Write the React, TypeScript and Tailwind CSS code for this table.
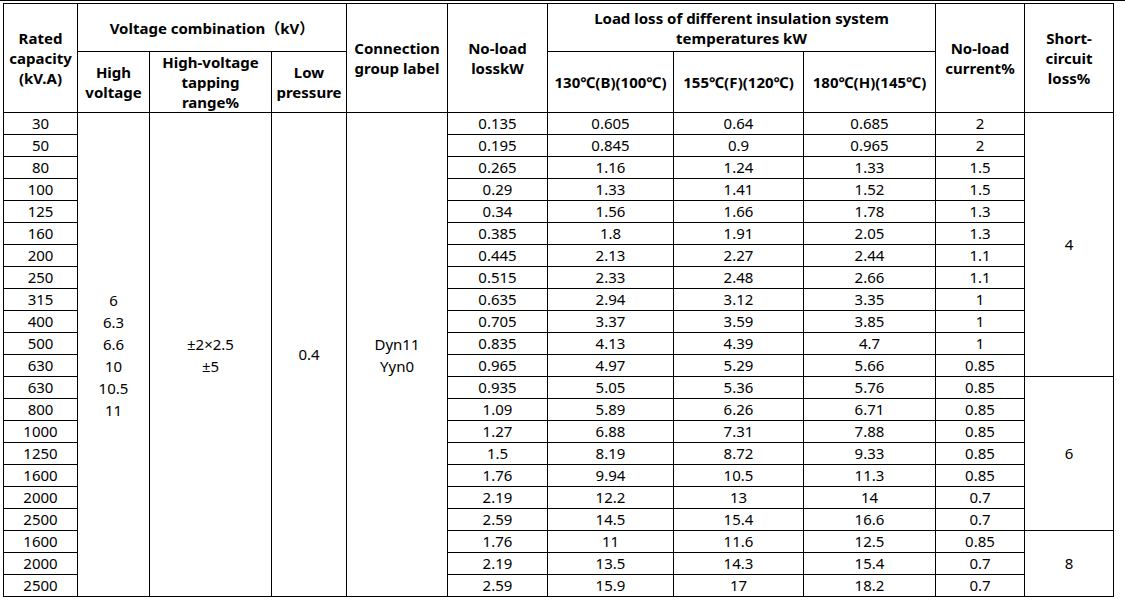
const rows: string[][] = [
  ['30', '0.135', '0.605', '0.64', '0.685', '2'],
  ['50', '0.195', '0.845', '0.9', '0.965', '2'],
  ['80', '0.265', '1.16', '1.24', '1.33', '1.5'],
  ['100', '0.29', '1.33', '1.41', '1.52', '1.5'],
  ['125', '0.34', '1.56', '1.66', '1.78', '1.3'],
  ['160', '0.385', '1.8', '1.91', '2.05', '1.3'],
  ['200', '0.445', '2.13', '2.27', '2.44', '1.1'],
  ['250', '0.515', '2.33', '2.48', '2.66', '1.1'],
  ['315', '0.635', '2.94', '3.12', '3.35', '1'],
  ['400', '0.705', '3.37', '3.59', '3.85', '1'],
  ['500', '0.835', '4.13', '4.39', '4.7', '1'],
  ['630', '0.965', '4.97', '5.29', '5.66', '0.85'],
  ['630', '0.935', '5.05', '5.36', '5.76', '0.85'],
  ['800', '1.09', '5.89', '6.26', '6.71', '0.85'],
  ['1000', '1.27', '6.88', '7.31', '7.88', '0.85'],
  ['1250', '1.5', '8.19', '8.72', '9.33', '0.85'],
  ['1600', '1.76', '9.94', '10.5', '11.3', '0.85'],
  ['2000', '2.19', '12.2', '13', '14', '0.7'],
  ['2500', '2.59', '14.5', '15.4', '16.6', '0.7'],
  ['1600', '1.76', '11', '11.6', '12.5', '0.85'],
  ['2000', '2.19', '13.5', '14.3', '15.4', '0.7'],
  ['2500', '2.59', '15.9', '17', '18.2', '0.7'],
];

// short-circuit loss groups: start row -> [rowSpan, value]
const shortCircuit: Record<number, [number, string]> = {
  0: [12, '4'],
  12: [7, '6'],
  19: [3, '8'],
};

const widths = [74, 72, 122, 75, 101, 100, 126, 130, 132, 89, 89];

const th = 'border border-black p-0 text-center align-middle font-bold leading-[20px]';
const td = 'border border-black p-0 text-center align-middle leading-[21px]';

export default function App() {
  return (
    <div
      className="min-h-[606px] w-[1125px] border-t border-black bg-white text-[15px] text-black"
      style={{ fontFamily: '"Noto Sans", "Noto Sans CJK SC", sans-serif' }}
    >
      <table className="ml-[3px] mt-[2px] table-fixed border-collapse">
        <colgroup>
          {widths.map((w, i) => (
            <col key={i} style={{ width: w }} />
          ))}
        </colgroup>
        <thead>
          <tr className="h-[48px]">
            <th rowSpan={2} className={th}>
              Rated
              <br />
              capacity
              <br />
              (kV.A)
            </th>
            <th colSpan={3} className={th}>
              Voltage combination（kV）
            </th>
            <th rowSpan={2} className={th}>
              Connection
              <br />
              group label
            </th>
            <th rowSpan={2} className={th}>
              No-load
              <br />
              losskW
            </th>
            <th colSpan={3} className={th}>
              Load loss of different insulation system
              <br />
              temperatures kW
            </th>
            <th rowSpan={2} className={th}>
              No-load
              <br />
              current%
            </th>
            <th rowSpan={2} className={th}>
              Short-
              <br />
              circuit
              <br />
              loss%
            </th>
          </tr>
          <tr className="h-[60px]">
            <th className={th}>
              High
              <br />
              voltage
            </th>
            <th className={th}>
              High-voltage
              <br />
              tapping
              <br />
              range%
            </th>
            <th className={th}>
              Low
              <br />
              pressure
            </th>
            <th className={`${th} whitespace-nowrap`}>130℃(B)(100℃)</th>
            <th className={`${th} whitespace-nowrap`}>155℃(F)(120℃)</th>
            <th className={`${th} whitespace-nowrap`}>180℃(H)(145℃)</th>
          </tr>
        </thead>
        <tbody>
          {rows.map((r, i) => (
            <tr key={i} className="h-[22px]">
              <td className={td}>{r[0]}</td>
              {i === 0 && (
                <>
                  <td rowSpan={rows.length} className={`${td} !leading-[22px]`}>
                    6
                    <br />
                    6.3
                    <br />
                    6.6
                    <br />
                    10
                    <br />
                    10.5
                    <br />
                    11
                  </td>
                  <td rowSpan={rows.length} className={`${td} !leading-[22px]`}>
                    ±2×2.5
                    <br />
                    ±5
                  </td>
                  <td rowSpan={rows.length} className={td}>
                    0.4
                  </td>
                  <td rowSpan={rows.length} className={`${td} !leading-[22px]`}>
                    Dyn11
                    <br />
                    Yyn0
                  </td>
                </>
              )}
              <td className={td}>{r[1]}</td>
              <td className={td}>{r[2]}</td>
              <td className={td}>{r[3]}</td>
              <td className={td}>{r[4]}</td>
              <td className={td}>{r[5]}</td>
              {shortCircuit[i] && (
                <td rowSpan={shortCircuit[i][0]} className={td}>
                  {shortCircuit[i][1]}
                </td>
              )}
            </tr>
          ))}
        </tbody>
      </table>
    </div>
  );
}
